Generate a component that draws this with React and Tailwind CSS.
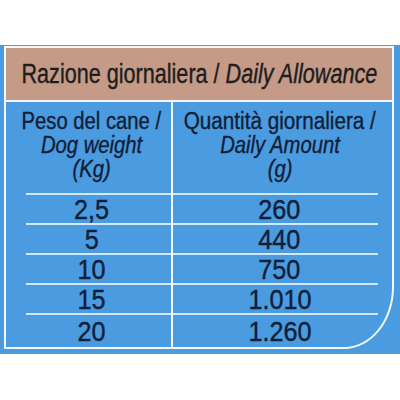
import React from "react";

const rows = [
  ["2,5", "260"],
  ["5", "440"],
  ["10", "750"],
  ["15", "1.010"],
  ["20", "1.260"],
];

const font = { fontFamily: '"Liberation Sans", Arial, sans-serif' };

function Line({ side }) {
  return side === "left" ? (
    <div className="h-[2px] ml-[20px] bg-[#d3e9f9]" />
  ) : (
    <div className="h-[2px] mr-[15px] bg-[#d3e9f9]" />
  );
}

function Num({ children }) {
  return (
    <span className="inline-block whitespace-nowrap text-[28px] leading-none text-[#112038] scale-x-90 [-webkit-text-stroke:0.4px_#112038]">
      {children}
    </span>
  );
}

export default function App() {
  return (
    <div className="w-[400px] h-[400px] bg-white pt-[45px]" style={font}>
      <div className="h-[309px] bg-[#4a9be0] pl-[4px] pr-[6px] pt-[1px] pb-[5px]">
        <div className="h-full flex flex-col border-2 border-[#f2f8fd] rounded-br-[50px_62px] overflow-hidden">
          <div className="h-[54px] shrink-0 bg-[#c59a86] border-b-2 border-[#f2f8fd] flex items-center justify-center overflow-visible">
            <span className="inline-block whitespace-nowrap text-[27px] leading-none text-[#1e1e1e] scale-x-80 pt-[1px] [-webkit-text-stroke:0.4px_#1e1e1e]">
              Razione giornaliera / <i>Daily Allowance</i>
            </span>
          </div>
          <div className="flex-1 flex">
            <div className="w-[167px] shrink-0 border-r-2 border-[#f2f8fd] flex flex-col">
              <div className="h-[91px] pl-[6px] pt-[7px] flex flex-col items-center text-[23px] leading-[24px] text-[#112038] [-webkit-text-stroke:0.35px_#112038]">
                <span className="inline-block whitespace-nowrap scale-x-88">Peso del cane /</span>
                <span className="inline-block whitespace-nowrap scale-x-88 italic">Dog weight</span>
                <span className="inline-block whitespace-nowrap scale-x-88 italic">(Kg)</span>
              </div>
              {rows.map((r, i) => (
                <React.Fragment key={i}>
                  <Line side="left" />
                  <div className={`${i === 4 ? "flex-1" : "h-[28px]"} pl-[6px] pt-[2px] flex items-center justify-center`}>
                    <Num>{r[0]}</Num>
                  </div>
                </React.Fragment>
              ))}
            </div>
            <div className="flex-1 flex flex-col">
              <div className="h-[91px] pr-[6px] pt-[7px] flex flex-col items-center text-[23px] leading-[24px] text-[#112038] [-webkit-text-stroke:0.35px_#112038]">
                <span className="inline-block whitespace-nowrap scale-x-90">Quantità giornaliera /</span>
                <span className="inline-block whitespace-nowrap scale-x-88 italic">Daily Amount</span>
                <span className="inline-block whitespace-nowrap scale-x-88 italic">(g)</span>
              </div>
              {rows.map((r, i) => (
                <React.Fragment key={i}>
                  <Line side="right" />
                  <div className={`${i === 4 ? "flex-1" : "h-[28px]"} pr-[6px] pt-[2px] flex items-center justify-center`}>
                    <Num>{r[1]}</Num>
                  </div>
                </React.Fragment>
              ))}
            </div>
          </div>
        </div>
      </div>
    </div>
  );
}
